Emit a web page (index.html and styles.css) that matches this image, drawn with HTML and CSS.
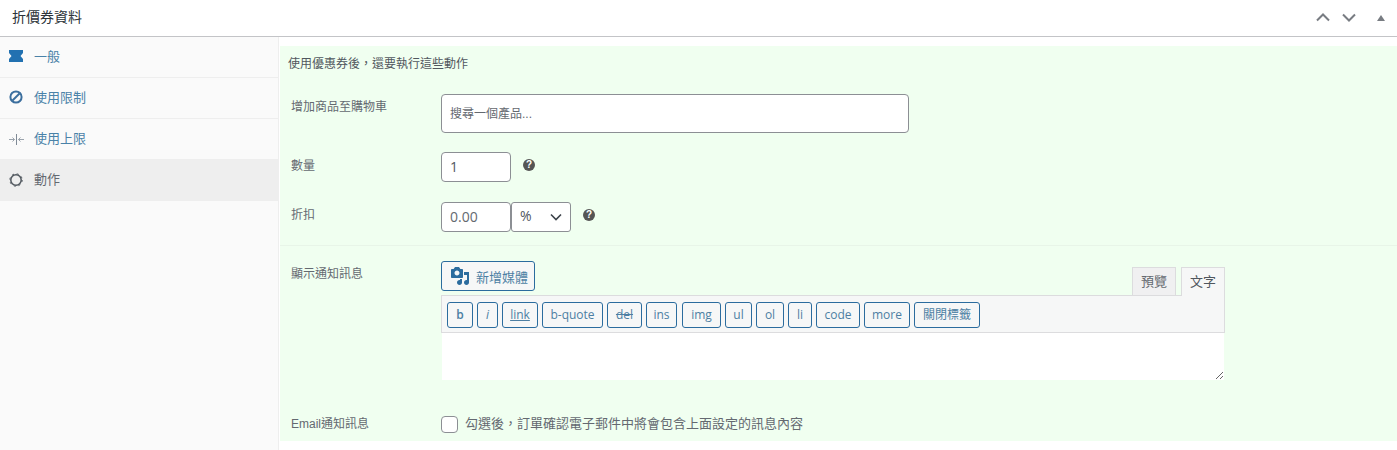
FILE: index.html
```html
<!DOCTYPE html>
<html lang="zh-Hant">
<head>
<meta charset="utf-8">
<title>折價券資料</title>
<link rel="stylesheet" href="styles.css">
</head>
<body>
<div class="box">
  <header class="box-head">
    <h2 class="box-title">折價券資料</h2>
    <div class="box-actions">
      <svg class="ctl-chev" width="16" height="10" viewBox="0 0 16 10"><path d="M2 7.500 8 1.500l6 6" fill="none" stroke="#787c82" stroke-width="2"/></svg>
      <svg class="ctl-chev" width="16" height="10" viewBox="0 0 16 10"><path d="M2 1.500l6 6 6-6" fill="none" stroke="#787c82" stroke-width="2"/></svg>
      <svg class="ctl-tri" width="8" height="6" viewBox="0 0 8 6"><path d="M4 0l4 6H0z" fill="#787c82"/></svg>
    </div>
  </header>
  <div class="box-body">
    <nav class="tabs">
      <a class="tab tab-raised"><svg class="tab-icon" width="14" height="12" viewBox="0 0 14 12"><path d="M0 0h14v3l-2.500 3L14 9v3H0V9l2.500-3L0 3z" fill="#2271b1"/></svg><span>一般</span></a>
      <a class="tab tab-raised"><svg class="tab-icon" width="14" height="14" viewBox="0 0 14 14"><circle cx="7" cy="7" r="5.600" fill="none" stroke="#3c6f9e" stroke-width="2"/><path d="M3.500 10.500l7-7" stroke="#3c6f9e" stroke-width="2"/></svg><span>使用限制</span></a>
      <a class="tab tab-short"><svg class="tab-icon icon-compress" width="15" height="13" viewBox="0 0 15 13"><path d="M7.500 1v11" stroke="#7f8a96" stroke-width="1"/><path d="M0 6.500h5.500M15 6.500H9.500M3.500 4.500l2 2-2 2M11.500 4.500l-2 2 2 2" fill="none" stroke="#9aa3ac" stroke-width="1"/></svg><span>使用上限</span></a>
      <a class="tab tab-active"><svg class="tab-icon" width="14" height="14" viewBox="0 0 14 14"><circle cx="7" cy="7" r="5.200" fill="none" stroke="#50575e" stroke-width="1.500"/><circle cx="7" cy="7" r="6.200" fill="none" stroke="#50575e" stroke-width="1" stroke-dasharray="2 2.870"/></svg><span>動作</span></a>
    </nav>
    <main class="panel">
      <section class="form">
        <p class="intro">使用優惠券後，還要執行這些動作</p>
        <div class="row row-product">
          <label class="row-label">增加商品至購物車</label>
          <div class="search">搜尋一個產品...</div>
        </div>
        <div class="row row-qty">
          <label class="row-label label-qty">數量</label>
          <input class="field field-num" type="text" value="1">
          <span class="help">?</span>
        </div>
        <div class="row row-discount">
          <label class="row-label">折扣</label>
          <input class="field field-num field-muted" type="text" value="0.00">
          <div class="select"><span class="select-value">%</span><svg width="12" height="8" viewBox="0 0 12 8"><path d="M1 1.500l5 5 5-5" fill="none" stroke="#3c434a" stroke-width="1.600"/></svg></div>
          <span class="help">?</span>
        </div>
        <hr class="divider">
        <div class="row row-editor">
          <label class="row-label">顯示通知訊息</label>
          <div class="editor">
            <div class="editor-head">
              <button class="media-btn" type="button">
                <svg width="20" height="20" viewBox="0 0 20 20"><path d="M13 11V4c0-.55-.45-1-1-1h-1.670L9 1H5L3.670 3H2c-.55 0-1 .45-1 1v7c0 .55.45 1 1 1h10c.55 0 1-.45 1-1zM7 4.500c1.380 0 2.500 1.120 2.500 2.500S8.380 9.500 7 9.500 4.500 8.380 4.500 7 5.620 4.500 7 4.500zM14 6h5v10.500c0 1.380-1.120 2.500-2.500 2.500S14 17.880 14 16.500s1.120-2.500 2.500-2.500c.17 0 .34.020.5.050V9h-3V6zm-4 8.050V13h2v3.500c0 1.380-1.120 2.500-2.500 2.500S7 17.880 7 16.500 8.120 14 9.500 14c.17 0 .34.020.5.050z" fill="#2b6c9e"/></svg>
                <span class="media-text">新增媒體</span>
              </button>
              <div class="mode-tabs">
                <span class="mode">預覽</span>
                <span class="mode mode-on">文字</span>
              </div>
            </div>
            <div class="toolbar">
              <button class="qt b-b" type="button">b</button>
              <button class="qt b-i" type="button">i</button>
              <button class="qt b-link" type="button">link</button>
              <button class="qt b-quote" type="button">b-quote</button>
              <button class="qt b-del" type="button">del</button>
              <button class="qt b-ins" type="button">ins</button>
              <button class="qt b-img" type="button">img</button>
              <button class="qt b-ul" type="button">ul</button>
              <button class="qt b-ol" type="button">ol</button>
              <button class="qt b-li" type="button">li</button>
              <button class="qt b-code" type="button">code</button>
              <button class="qt b-more" type="button">more</button>
              <button class="qt b-close" type="button">關閉標籤</button>
            </div>
            <textarea class="textarea"></textarea>
          </div>
        </div>
        <div class="row row-email">
          <label class="row-label label-email">Email通知訊息</label>
          <input class="check" type="checkbox">
          <span class="check-text">勾選後，訂單確認電子郵件中將會包含上面設定的訊息內容</span>
        </div>
      </section>
    </main>
  </div>
</div>
</body>
</html>
```
FILE: styles.css
```css
* { box-sizing: border-box; }
html, body { margin: 0; padding: 0; background: #fff; }
body {
  width: 1397px;
  height: 450px;
  overflow: hidden;
  font-family: "Liberation Sans", "Noto Sans CJK TC", sans-serif;
  font-size: 12px;
  line-height: 18px;
  color: #50575e;
}
.box-head {
  height: 37px;
  display: flex;
  align-items: center;
  justify-content: space-between;
  border-bottom: 1px solid #c3c4c7;
  background: #fff;
}
.box-title {
  margin: 0 0 2px 12px;
  font-size: 14px;
  font-weight: 400;
  line-height: 20px;
  color: #2c3338;
}
.box-actions {
  display: flex;
  align-items: center;
  gap: 10px;
  padding-right: 12px;
}
.ctl-tri { margin-left: 10px; }
.box-body { display: flex; height: 413px; }
.tabs {
  width: 279px;
  flex: none;
  background: #fafafa;
  border-right: 1px solid #eee;
}
.tab {
  display: flex;
  align-items: center;
  height: 41px;
  padding-left: 9px;
  gap: 11px;
  border-bottom: 1px solid #eee;
  color: #4a82a8;
  font-size: 13px;
}
.tab-raised .tab-icon { margin-bottom: 2px; }
.tab-short { height: 40px; border-bottom: 0; }
.icon-compress { margin-right: -1px; }
.tab-active { height: 42px; border-bottom: 0; background: #eee; color: #646970; }
.tab-icon { flex: none; }
.panel { flex: 1; padding: 9px 0 0 1px; background: #fff; }
.form {
  height: 395px;
  padding-top: 9px;
  background: #f0fff0;
}
.intro { margin: 0 0 21px 8px; color: #50575e; }
.row { display: flex; align-items: flex-start; padding-left: 11px; }
.row-label { width: 150px; flex: none; padding-top: 4px; color: #646970; }
.label-qty { padding-top: 5px; }
.search {
  width: 468px;
  height: 39px;
  padding: 0 8px;
  display: flex;
  align-items: center;
  background: #fff;
  border: 1px solid #8c8f94;
  border-radius: 4px;
  color: #646970;
}
.row-qty { margin-top: 19px; }
.row-discount { margin-top: 20px; }
.field {
  height: 30px;
  padding: 0 8px 2px;
  background: #fff;
  border: 1px solid #8c8f94;
  border-radius: 4px;
  color: #50575e;
  font: 14px/26px "Open Sans", sans-serif;
}
.field-num { width: 70px; }
.field-muted { color: #646970; }
.select {
  width: 60px;
  height: 30px;
  display: flex;
  align-items: center;
  justify-content: space-between;
  padding: 0 8px;
  background: #fff;
  border: 1px solid #8c8f94;
  border-radius: 3px;
  font: 14px/28px "Open Sans", sans-serif;
  color: #50575e;
}
.select-value { margin-bottom: 2px; }
.help {
  width: 12px;
  height: 12px;
  margin: 7px 0 0 12px;
  border-radius: 50%;
  background: #555;
  color: #fff;
  font: 700 10px/12px "Liberation Sans", sans-serif;
  text-align: center;
}
.divider {
  height: 1px;
  margin: 13px 0 15px;
  border: 0;
  background: #e8f5e8;
}
.editor { width: 784px; }
.editor-head {
  height: 34px;
  display: flex;
  align-items: flex-start;
  justify-content: space-between;
}
.media-btn {
  width: 94px;
  height: 30px;
  display: flex;
  align-items: center;
  gap: 6px;
  padding: 0 0 0 8px;
  background: #f6f7f7;
  border: 1px solid #2b6c9e;
  border-radius: 3px;
  color: #4d7fa3;
  font: 13px/18px "Noto Sans CJK TC", sans-serif;
}
.media-text { padding-top: 2px; }
.mode-tabs { display: flex; gap: 5px; padding-top: 6px; }
.mode {
  width: 44px;
  height: 28px;
  text-align: center;
  background: #f0f0f1;
  border: 1px solid #dcdcde;
  border-bottom: 0;
  font-size: 13px;
  line-height: 28px;
  color: #646970;
}
.mode-on { height: 29px; background: #f6f7f7; color: #50575e; }
.toolbar {
  height: 38px;
  display: flex;
  gap: 4px;
  padding: 6px 0 0 5px;
  background: #f6f7f7;
  border: 1px solid #dcdcde;
}
.qt {
  height: 26px;
  padding: 0;
  background: #f6f7f7;
  border: 1px solid #2b6c9e;
  border-radius: 3px;
  color: #4d7fa3;
  font: 12px/24px "Open Sans", "Noto Sans CJK TC", sans-serif;
}
.b-b { width: 26px; font-weight: 600; }
.b-i { width: 21px; font-style: italic; }
.b-link { width: 36px; text-decoration: underline; }
.b-quote { width: 61px; }
.b-del { width: 35px; text-decoration: line-through; }
.b-ins { width: 31px; }
.b-img { width: 39px; margin-left: 1px; }
.b-ul { width: 27px; }
.b-ol { width: 28px; }
.b-li { width: 24px; }
.b-code { width: 44px; }
.b-more { width: 46px; }
.b-close { width: 66px; }
.textarea {
  display: block;
  width: 782px;
  height: 47px;
  margin-left: 1px;
  padding: 8px;
  background: #fff;
  border: 0;
  outline: 0;
  resize: vertical;
}
.row-email { margin-top: 35px; align-items: center; }
.label-email { padding-top: 0; }
.check {
  appearance: none;
  width: 17px;
  height: 17px;
  margin: 0 7px 0 0;
  background: #fff;
  border: 1px solid #8c8f94;
  border-radius: 4px;
}
.check-text { font-size: 13px; color: #646970; }
```
